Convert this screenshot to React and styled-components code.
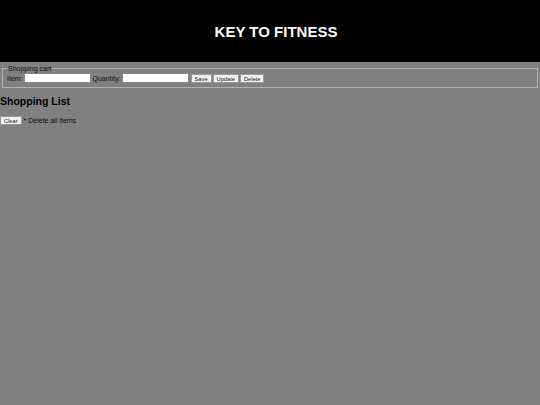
import React from "react"
import styled, { createGlobalStyle } from "styled-components"

const Global = createGlobalStyle`
  html, body {
    margin: 0;
    padding: 0;
    background: #808080;
    font-family: "Liberation Sans", Arial, sans-serif;
    color: #000;
  }
`

const Header = styled.header`
  height: 62px;
  background: #000;
  display: flex;
  align-items: center;
  justify-content: center;
  padding-left: 12px;
`

const Title = styled.h1`
  margin: 0;
  color: #fff;
  font-size: 15px;
  font-weight: bold;
`

const Cart = styled.fieldset`
  margin: 3px 2px 0 2px;
  padding: 1px 4px 4px 4px;
  border: 1px solid #b0b0b0;
  font-size: 7px;
`

const Legend = styled.legend`
  padding: 0 1px;
  font-size: 7px;
  color: #111;
`

const Row = styled.div`
  display: flex;
  align-items: center;
  gap: 1px;
  font-size: 7px;
  color: #111;
`

const Label = styled.label`
  font-size: 7px;
`

const Input = styled.input`
  width: 65px;
  height: 8px;
  padding: 0;
  margin: 0 1px 0 0;
  border: 1px solid #888;
  background: #fff;
  box-sizing: content-box;
`

const Button = styled.button`
  font-family: "Liberation Sans", Arial, sans-serif;
  font-size: 5.7px;
  padding: 1px 3px;
  margin: 0;
  height: 9px;
  line-height: 6px;
  border: 1px solid #999;
  border-radius: 1px;
  background: #efefef;
  color: #222;
`

const Heading = styled.h2`
  margin: 7px 0 9px 0;
  font-size: 10.5px;
  font-weight: bold;
`

const ClearRow = styled.div`
  display: flex;
  align-items: center;
  gap: 2px;
  font-size: 7px;
  color: #111;
`

export default function App() {
  return (
    <>
      <Global />
      <Header>
        <Title>KEY TO FITNESS</Title>
      </Header>
      <Cart>
        <Legend>Shopping cart</Legend>
        <Row>
          <Label>Item:</Label>
          <Input />
          <Label>Quantity:</Label>
          <Input />
          <Button>Save</Button>
          <Button>Update</Button>
          <Button>Delete</Button>
        </Row>
      </Cart>
      <section>
        <Heading>Shopping List</Heading>
        <ClearRow>
          <Button>Clear</Button>
          <span>* Delete all items</span>
        </ClearRow>
      </section>
    </>
  )
}
